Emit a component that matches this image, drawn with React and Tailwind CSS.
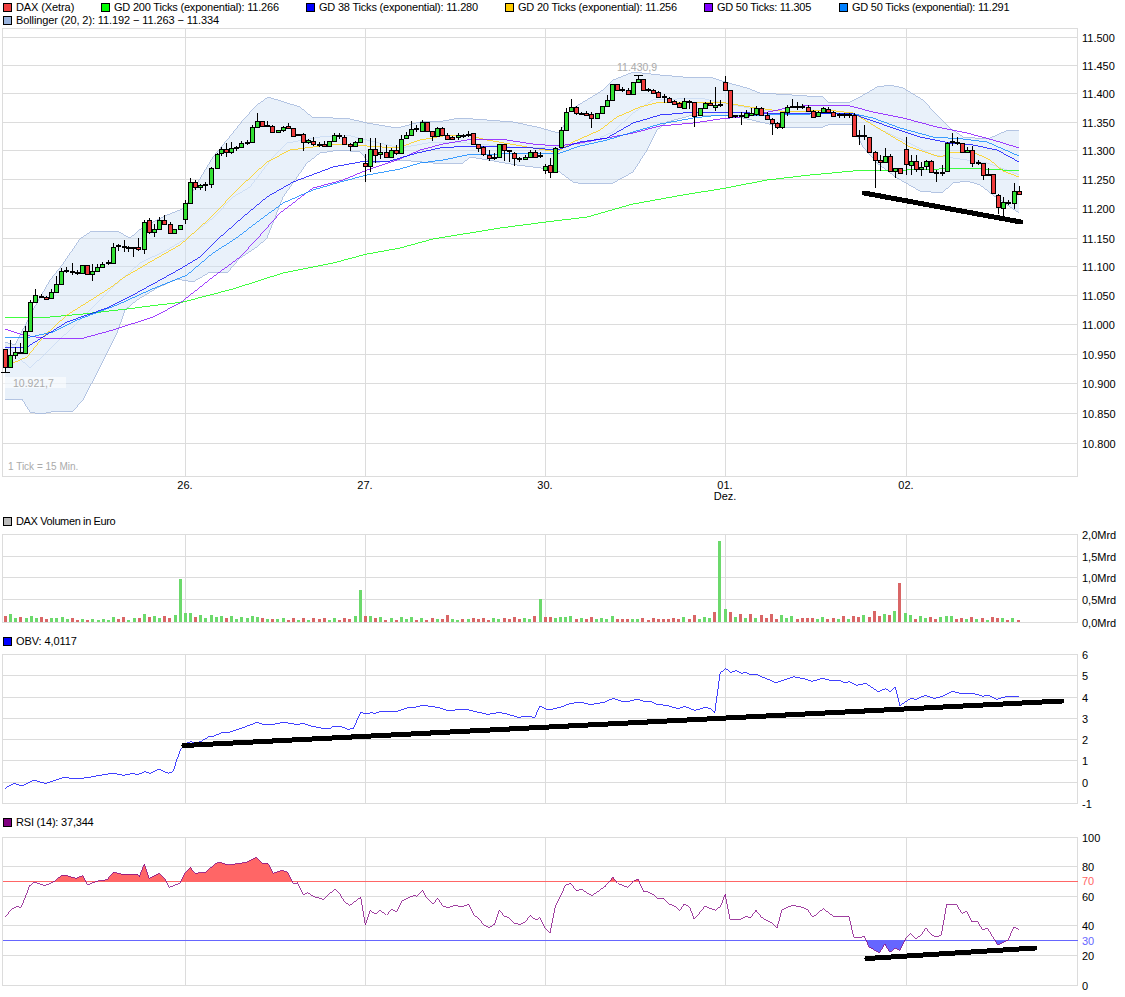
import React from "react";

const dayLines = [185.5, 365.5, 545.5, 725.5, 906.5];

// [x, body top, body bottom, wick top, wick bottom, type]
const candles = [
  [5,349,367,349,372,"r"],[10,355,367,340,368,"g"],[15,352,355,347,359,"g"],[20,352,353,343,354,"r"],[25,331,353,326,353,"g"],
  [30,302,331,300,331,"g"],[35,295,302,289,302,"g"],[41,296,297,294,298,"r"],[46,297,299,296,300,"r"],[51,292,298,289,299,"g"],
  [56,284,292,276,293,"g"],[61,271,284,268,285,"g"],[66,271,271,267,273,"d"],[72,271,272,263,275,"r"],[77,273,273,270,275,"d"],
  [82,265,273,265,274,"g"],[87,265,274,265,274,"r"],[92,271,274,264,281,"g"],[97,267,271,264,272,"g"],[102,264,267,262,268,"g"],
  [108,263,263,260,265,"d"],[113,247,263,243,264,"g"],[118,246,246,244,251,"d"],[124,247,247,240,252,"d"],[128,248,248,246,252,"d"],
  [133,248,248,248,257,"d"],[138,247,249,238,251,"r"],[144,222,249,220,254,"g"],[149,220,232,218,234,"r"],[154,229,232,224,237,"g"],
  [159,220,229,217,230,"g"],[164,220,224,215,225,"r"],[170,224,233,222,234,"r"],[174,229,233,229,234,"g"],[180,225,229,225,229,"g"],
  [185,203,219,200,224,"g"],[190,182,203,178,204,"g"],[195,182,187,180,190,"r"],[200,185,187,184,190,"g"],[205,185,185,182,191,"d"],
  [211,168,184,167,188,"g"],[217,154,168,153,169,"g"],[221,149,153,147,156,"g"],[226,149,152,143,157,"r"],[231,148,152,142,154,"g"],
  [236,147,148,146,151,"g"],[241,143,147,141,148,"g"],[247,143,143,140,145,"d"],[252,127,142,125,143,"g"],[257,121,127,113,128,"g"],
  [262,121,126,121,127,"r"],[267,126,126,121,127,"d"],[272,126,132,125,132,"r"],[278,130,132,130,133,"g"],[283,127,130,126,132,"g"],
  [288,126,128,123,129,"r"],[293,128,136,128,137,"r"],[298,135,135,134,136,"d"],[303,134,142,133,151,"r"],[308,140,142,139,144,"g"],
  [313,141,144,137,146,"r"],[319,145,145,142,147,"d"],[324,144,146,141,147,"r"],[329,141,146,141,147,"g"],[334,135,141,133,142,"g"],
  [339,136,136,133,139,"d"],[344,137,144,135,145,"r"],[350,144,146,143,151,"r"],[355,142,146,141,147,"g"],[360,138,142,138,143,"g"],
  [365,163,166,154,182,"r"],[370,149,166,138,172,"g"],[375,149,155,138,163,"r"],[380,152,154,143,159,"g"],[386,152,157,145,158,"r"],
  [391,150,157,148,158,"g"],[396,150,153,145,155,"r"],[401,139,153,135,153,"g"],[406,135,138,132,139,"g"],[411,129,135,121,136,"g"],
  [416,129,129,125,132,"d"],[422,122,131,120,132,"g"],[427,122,131,122,132,"r"],[432,131,136,131,141,"r"],[437,128,136,127,137,"g"],
  [442,128,135,127,135,"r"],[447,135,139,133,140,"r"],[452,137,139,136,140,"r"],[458,135,137,133,140,"g"],[463,136,136,134,138,"d"],
  [468,135,135,131,137,"d"],[473,133,144,133,145,"r"],[478,144,148,144,152,"r"],[483,147,154,146,156,"r"],[489,155,158,150,161,"r"],
  [494,157,158,153,160,"g"],[499,144,157,144,158,"g"],[504,144,150,144,161,"r"],[509,151,151,150,162,"d"],[514,153,158,152,166,"r"],
  [519,159,159,157,162,"d"],[525,157,159,155,160,"g"],[530,152,157,150,157,"g"],[535,152,157,150,158,"r"],[540,156,156,152,158,"d"],
  [545,166,170,164,174,"g"],[550,165,172,158,178,"r"],[555,148,172,147,172,"g"],[561,130,147,127,148,"g"],[566,112,130,108,130,"g"],
  [571,107,111,99,112,"g"],[576,107,113,106,115,"r"],[581,113,114,112,115,"g"],[586,113,115,111,116,"r"],[591,114,118,112,128,"r"],
  [597,113,118,113,119,"g"],[602,106,113,106,114,"g"],[607,100,106,95,107,"g"],[612,84,100,84,100,"g"],[617,84,90,84,91,"r"],
  [622,90,90,87,92,"d"],[628,90,94,88,95,"r"],[633,82,94,82,95,"g"],[638,79,82,76,82,"g"],[643,79,90,79,90,"r"],
  [648,90,90,88,92,"d"],[653,90,93,89,94,"r"],[658,92,97,91,97,"r"],[664,97,97,94,103,"d"],[669,98,102,97,102,"r"],
  [674,101,104,100,105,"r"],[679,103,107,102,108,"r"],[684,101,108,98,109,"g"],[689,102,102,100,109,"d"],[694,102,116,102,127,"r"],
  [700,108,115,108,116,"g"],[705,103,108,102,109,"g"],[710,103,105,100,106,"r"],[715,105,107,87,111,"g"],[720,105,106,100,107,"d"],
  [725,82,90,76,90,"r"],[730,90,117,90,118,"r"],[735,116,116,115,118,"d"],[741,116,116,112,125,"d"],[746,113,117,110,118,"g"],
  [751,113,115,108,116,"g"],[756,108,114,106,116,"g"],[761,108,115,107,116,"r"],[767,115,119,112,120,"r"],[772,119,123,118,135,"r"],
  [777,123,127,122,129,"r"],[782,112,127,112,129,"g"],[787,107,112,105,116,"g"],[792,107,108,99,108,"d"],[797,107,107,102,110,"d"],
  [802,107,107,104,109,"d"],[808,107,111,105,112,"r"],[813,111,117,110,118,"r"],[818,112,116,111,117,"g"],[823,108,112,107,113,"g"],
  [828,109,112,107,113,"r"],[833,112,116,111,117,"r"],[839,115,115,113,118,"d"],[844,115,115,113,118,"d"],[849,115,115,113,118,"d"],
  [854,115,136,113,137,"r"],[859,136,136,130,145,"d"],[864,136,136,125,140,"d"],[869,137,152,137,153,"r"],[875,152,160,151,188,"r"],
  [880,160,162,155,171,"r"],[885,156,162,148,163,"g"],[890,156,171,154,172,"r"],[895,168,171,168,178,"g"],[900,168,173,168,174,"r"],
  [906,149,164,137,175,"r"],[911,161,165,155,175,"g"],[916,161,169,155,172,"r"],[921,167,169,162,176,"g"],[926,161,166,160,170,"g"],
  [931,161,172,160,173,"r"],[936,173,173,170,182,"d"],[942,173,173,165,176,"d"],[947,143,171,142,172,"g"],[952,142,142,133,146,"d"],
  [957,143,143,137,145,"d"],[962,143,152,143,153,"r"],[967,150,152,147,153,"g"],[972,150,163,146,167,"r"],[978,163,163,160,165,"d"],
  [983,163,175,163,180,"r"],[988,174,175,168,176,"g"],[993,174,193,174,194,"r"],[998,195,207,194,214,"r"],[1003,202,208,197,216,"g"],
  [1008,203,203,200,205,"d"],[1014,191,203,183,209,"g"],[1019,191,194,186,195,"r"],
];

const bollUpper = [[5,342],[15,345],[33,310],[50,280],[62,265],[80,239],[90,232],[117,231],[130,238],[143,227],[167,215],[185,208],[195,187],[213,157],[227,140],[243,120],[257,105],[268,97],[287,103],[300,107],[312,117],[333,118],[350,119],[367,123],[397,128],[420,122],[443,121],[460,118],[513,122],[537,127],[558,133],[563,127],[570,110],[590,98],[603,90],[613,80],[633,72],[660,75],[683,77],[713,78],[725,82],[747,88],[760,93],[823,97],[828,102],[850,102],[860,97],[877,87],[890,85],[903,88],[923,100],[937,115],[950,128],[963,137],[987,139],[997,135],[1008,130],[1019,131]];
const bollLower = [[5,400],[22,399],[30,412],[40,414],[57,411],[72,412],[83,400],[100,367],[117,333],[125,310],[137,300],[157,288],[177,279],[193,282],[210,272],[227,273],[240,258],[257,247],[267,238],[283,197],[293,183],[307,163],[320,153],[340,150],[360,152],[370,163],[400,160],[433,163],[463,163],[470,157],[517,165],[557,170],[573,182],[583,184],[613,183],[633,172],[647,150],[657,130],[667,122],[693,115],[725,115],[743,118],[760,122],[783,127],[823,127],[830,124],[852,125],[863,147],[877,163],[897,178],[920,191],[942,193],[953,183],[967,181],[980,185],[993,195],[1019,213]];
const bollMid = [[5,345],[30,368],[47,352],[83,317],[113,287],[140,263],[167,250],[187,238],[213,218],[233,197],[250,187],[273,157],[287,143],[320,137],[347,135],[367,140],[400,148],[433,142],[467,143],[510,147],[557,147],[587,143],[613,132],[633,113],[653,100],[700,98],[733,105],[760,110],[827,113],[860,115],[877,128],[907,142],[933,155],[953,158],[987,163],[1007,170],[1019,175]];

const averages = [
  { color: "#00ff00", points: [[5,317],[50,317],[83,314],[127,309],[150,306],[183,302],[233,289],[283,273],[333,263],[367,254],[400,248],[433,239],[500,228],[546,222],[587,217],[633,204],[683,195],[726,188],[767,180],[810,175],[853,171],[907,170],[970,168],[1019,171]] },
  { color: "#ffcc00", points: [[13,363],[27,357],[43,337],[67,315],[83,305],[110,288],[123,278],[150,262],[180,245],[188,238],[210,218],[240,187],[267,162],[290,150],[320,146],[343,144],[367,146],[397,148],[420,140],[443,136],[467,135],[487,140],[533,148],[557,152],[573,142],[600,130],[617,117],[640,107],[660,102],[687,103],[720,102],[750,107],[787,112],[827,110],[853,113],[873,125],[893,137],[910,147],[940,157],[950,153],[973,152],[990,160],[1003,171],[1019,177]] },
  { color: "#8000ff", points: [[5,329],[23,335],[43,338],[80,339],[113,330],[153,317],[180,303],[213,277],[240,257],[257,239],[280,213],[313,188],[343,180],[367,170],[400,159],[420,150],[443,144],[467,140],[500,139],[533,144],[557,146],[580,143],[607,138],[633,133],[660,126],[693,123],[720,119],[750,116],[787,108],[810,105],[850,106],[873,112],[903,118],[937,127],[967,133],[993,140],[1019,148]] },
  { color: "#0080ff", points: [[5,338],[30,337],[53,332],[77,320],[117,305],[150,290],[187,275],[213,253],[235,239],[260,220],[283,203],[313,190],[340,182],[367,175],[400,169],[420,163],[443,160],[467,155],[500,154],[533,153],[557,154],[580,146],[607,140],[633,132],[660,124],[693,118],[720,115],[767,115],[810,114],[850,113],[873,118],[900,128],[933,137],[963,139],[987,142],[1019,156]] },
  { color: "#0000ff", points: [[5,348],[27,347],[67,322],[107,308],[133,295],[180,269],[200,257],[218,239],[243,217],[267,197],[293,182],[333,167],[360,162],[390,161],[400,158],[417,153],[440,148],[467,146],[500,147],[533,148],[557,150],[580,142],[607,138],[633,123],[660,115],[683,113],[720,112],[750,113],[850,113],[870,120],[893,128],[920,137],[950,143],[973,145],[997,150],[1019,162]] },
];

// positive = green bar, negative = red bar
const volumes = [
  -6,8,4,-5,4,6,4,-5,-3,4,4,5,3,-4,-2,3,-2,3,2,3,2,5,-3,-5,2,4,-4,8,-5,6,4,-6,-4,7,43,9,9,-5,7,4,7,5,6,-4,6,3,5,4,6,5,-4,3,-3,3,4,-2,-4,2,-4,2,-4,-3,-4,2,4,-2,-4,-3,6,32,-6,6,-4,5,-2,4,
  -2,5,3,5,-2,4,-2,-4,3,-3,-7,3,2,-3,3,-4,-3,-4,-2,4,3,-4,-3,-5,-3,4,3,-6,23,-5,-5,4,5,5,6,-3,4,-3,-5,3,4,3,6,-3,-3,-3,3,3,-4,-2,-4,-3,-3,-3,-4,-3,5,-3,-7,3,
  5,4,-10,81,13,-10,5,-8,4,-8,4,-7,-4,-8,-3,7,4,6,-3,-4,-4,-4,3,5,-3,-4,3,-6,3,-6,-5,7,-5,-11,-6,8,-7,11,-39,9,7,-3,6,4,-5,-3,5,6,6,-3,-4,3,-5,3,-4,2,-5,-4,4,-2,4,-2,
];

const obvLine = [
  ...[[14,475],[40,460],[60,468],[95,451],[128,460],[180,442],[215,447],[250,442],[280,436],[315,430],[345,436],[370,431],[385,433],[405,424],[420,430],[445,418],[472,430],[485,424],[495,390],[505,360],[520,340],[535,335],[545,340],[565,333],[585,320],[600,318],[620,308],[640,308],[680,293],[720,277],[735,283],[770,282],[795,277],[830,283],[850,281],[870,288],[905,295],[925,295],[935,288],[955,290],[975,298],[990,295],[1000,270],[1010,247],[1025,252],[1040,248],[1050,250],[1065,244],[1075,246],[1110,244],[1150,231],[1165,231],[1185,226],[1230,233],[1255,243],[1280,239],[1310,239],[1340,247],[1365,253],[1395,247],[1420,252],[1450,262],[1475,259],[1497,262],[1512,229],[1535,240]].map(([x, y]) => [x / 2.8, 630 + y / 3]),
  ...[[0,232],[30,220],[60,217],[85,224],[125,216],[148,205],[170,213],[195,213],[215,208],[235,214],[250,214],[270,223],[295,226],[330,236],[345,229],[375,241],[405,232],[420,236],[430,250],[445,130],[460,115],[475,127],[490,122],[505,130],[515,127],[530,135],[545,133],[600,158],[650,140],[680,147],[700,154],[730,145],[760,153],[780,152],[790,158],[805,155],[825,166],[850,160],[885,185],[905,176],[918,185],[932,170],[945,227],[975,205],[990,208],[1015,196],[1040,205],[1060,200],[1090,184],[1120,192],[1140,190],[1160,193],[1175,199],[1190,196],[1215,208],[1230,202],[1255,199],[1275,199]].map(([x, y]) => [560 + x / 2.78, 630 + y / 3]),
];

const rsiLine = [
  ...[[15,320],[35,295],[45,289],[58,292],[70,265],[82,228],[97,216],[125,227],[140,221],[155,212],[172,196],[185,196],[212,205],[232,197],[245,224],[265,215],[280,212],[300,209],[317,187],[340,192],[385,193],[390,200],[404,163],[418,205],[445,190],[462,207],[474,232],[503,220],[518,190],[533,172],[545,190],[575,187],[605,160],[617,157],[640,165],[690,157],[717,142],[735,160],[750,160],[765,190],[790,181],[805,187],[822,223],[833,218],[850,254],[860,248],[880,260],[905,268],[937,238],[950,248],[965,277],[980,286],[1010,262],[1023,344],[1037,300],[1050,313],[1065,301],[1082,316],[1097,298],[1110,306],[1127,270],[1155,257],[1168,259],[1183,240],[1197,268],[1212,283],[1225,265],[1240,288],[1255,294],[1270,287],[1295,289],[1312,282],[1327,316],[1340,325],[1355,345],[1370,353],[1385,342],[1398,301],[1412,318],[1425,323],[1440,340],[1455,343],[1470,337],[1485,316],[1500,330],[1512,323],[1527,355],[1540,370],[1555,290]].map(([x, y]) => [x / 2.8, 810 + y / 3]),
  ...[[0,262],[15,226],[30,220],[45,242],[60,238],[88,257],[125,230],[147,202],[160,220],[188,232],[205,212],[217,208],[232,244],[245,246],[258,253],[272,265],[288,265],[303,282],[318,288],[333,301],[345,283],[360,290],[373,328],[403,289],[432,301],[447,288],[459,253],[473,328],[503,328],[517,319],[530,323],[545,301],[560,322],[590,340],[603,355],[617,300],[645,286],[675,292],[690,301],[703,322],[732,296],[760,319],[803,319],[817,382],[837,382],[845,378],[860,412],[888,428],[903,402],[917,427],[932,414],[945,421],[960,387],[975,370],[990,386],[1003,376],[1017,354],[1032,374],[1045,380],[1060,376],[1075,283],[1103,285],[1117,310],[1130,304],[1145,336],[1160,333],[1175,360],[1188,354],[1217,405],[1245,390],[1262,352],[1275,358]].map(([x, y]) => [560 + x / 2.78, 810 + y / 3]),
];

const pts = (list) => list.map((p) => p.join(",")).join(" ");

const LegendItem = ({ swatch, label, className }) => (
  <div className={"flex items-center gap-[4px] whitespace-nowrap " + className}>
    <span className={"w-[9px] h-[9px] border border-black shrink-0 " + swatch} />
    <span>{label}</span>
  </div>
);

// panel frame, horizontal grid lines, day lines and the axis labels on the right
const Frame = ({ top, bottom, rows }) => (
  <g>
    <g stroke="#dcdcdc" fill="none" shapeRendering="crispEdges">
      <rect x="2.5" y={top} width="1075" height={bottom - top} />
      {rows.map((r) => (
        <line key={r.label} x1="2.5" x2="1078" y1={r.y} y2={r.y} />
      ))}
      {dayLines.map((x) => (
        <line key={x} x1={x} x2={x} y1={top} y2={bottom} />
      ))}
    </g>
    {rows.map((r) => (
      <text key={r.label} x="1082" y={r.y + 4} fontSize="11" fill={r.color || "#000"}>
        {r.label}
      </text>
    ))}
  </g>
);

const Candle = ({ c }) => {
  const [x, top, bot, wickTop, wickBot, type] = c;
  if (type === "d") {
    return (
      <g shapeRendering="crispEdges">
        <line x1={x + 0.5} x2={x + 0.5} y1={wickTop} y2={wickBot} stroke="#000" />
        <rect x={x - 2} y={top - 1} width="5" height="2" fill="#000" />
      </g>
    );
  }
  return (
    <g shapeRendering="crispEdges">
      <line x1={x + 0.5} x2={x + 0.5} y1={wickTop} y2={wickBot} stroke="#000" />
      <rect
        x={x - 1.5}
        y={top + 0.5}
        width="4"
        height={Math.max(bot - top, 1)}
        fill={type === "g" ? "#33e033" : "#ee3b3b"}
        stroke="#000"
      />
    </g>
  );
};

const priceRows = [
  [37.5, "11.500"], [65.5, "11.450"], [93.5, "11.400"], [122.5, "11.350"], [150.5, "11.300"],
  [179.5, "11.250"], [208.5, "11.200"], [238.5, "11.150"], [266.5, "11.100"], [295.5, "11.050"],
  [324.5, "11.000"], [354.5, "10.950"], [383.5, "10.900"], [413.5, "10.850"], [443.5, "10.800"],
].map(([y, label]) => ({ y, label }));

const PriceChart = () => (
  <svg className="block" width="1125" height="486" viewBox="0 27 1125 486">
    <Frame top={28.5} bottom={476.5} rows={priceRows} />
    <polygon points={pts([...bollUpper, ...[...bollLower].reverse()])} fill="#cfe0f5" fillOpacity="0.45" />
    <g fill="none" shapeRendering="crispEdges" strokeWidth="0.75">
      <polyline points={pts(bollUpper)} stroke="#9db3d9" />
      <polyline points={pts(bollLower)} stroke="#9db3d9" />
      <polyline points={pts(bollMid)} stroke="#c6d8f3" />
    </g>
    <rect x="3" y="377" width="63" height="11" fill="#fff" fillOpacity="0.55" />
    <text x="13" y="387" fontSize="10.5" fill="#aaa">10.921,7</text>
    <text x="617" y="71" fontSize="10.5" fill="#aaa">11.430,9</text>
    <text x="8" y="470" fontSize="10" fill="#aaa">1 Tick = 15 Min.</text>
    <g fill="none" shapeRendering="crispEdges" strokeWidth="0.75">
      {averages.map((a) => (
        <polyline key={a.color} points={pts(a.points)} stroke={a.color} />
      ))}
    </g>
    {candles.map((c) => (
      <Candle key={c[0]} c={c} />
    ))}
    <g stroke="#000" shapeRendering="crispEdges">
      <line x1="1" x2="10" y1="372.5" y2="372.5" />
      <line x1="634" x2="643" y1="75.5" y2="75.5" />
      <line x1="864" y1="193" x2="1021" y2="222" strokeWidth="5" strokeLinecap="round" />
    </g>
    {[["26.", 185], ["27.", 365], ["30.", 545], ["01.", 725], ["02.", 906]].map(([label, x]) => (
      <text key={label} x={x} y="489" fontSize="11" textAnchor="middle" fill="#000">{label}</text>
    ))}
    <text x="725" y="500" fontSize="11" textAnchor="middle" fill="#000">Dez.</text>
  </svg>
);

const volumeRows = [
  [534.5, "2,0Mrd"], [556.5, "1,5Mrd"], [577.5, "1,0Mrd"], [599.5, "0,5Mrd"], [622.5, "0,0Mrd"],
].map(([y, label]) => ({ y, label }));

const VolumeChart = () => (
  <svg className="block" width="1125" height="104" viewBox="0 529 1125 104">
    <Frame top={534.5} bottom={622.5} rows={volumeRows} />
    <g shapeRendering="crispEdges">
      {volumes.map((v, i) => {
        const h = Math.abs(v);
        return (
          <rect
            key={i}
            x={Math.round(4 + i * 5.14)}
            y={622 - h}
            width="3"
            height={h}
            fill={v > 0 ? "#6cd96c" : "#d96666"}
          />
        );
      })}
    </g>
  </svg>
);

const obvRows = [
  [654.5, "6"], [675.5, "5"], [697.5, "4"], [718.5, "3"], [739.5, "2"], [760.5, "1"], [782.5, "0"], [803.5, "-1"],
].map(([y, label]) => ({ y, label }));

const ObvChart = () => (
  <svg className="block" width="1125" height="165" viewBox="0 649 1125 165">
    <Frame top={654.5} bottom={803.5} rows={obvRows} />
    <polyline points={pts(obvLine)} fill="none" stroke="#0000ff" strokeWidth="0.75" shapeRendering="crispEdges" />
    <line x1="184" y1="745.5" x2="1062" y2="701" stroke="#000" strokeWidth="5" strokeLinecap="round" shapeRendering="crispEdges" />
  </svg>
);

const rsiRows = [
  { y: 837.5, label: "100" },
  { y: 866.5, label: "80" },
  { y: 896.5, label: "60" },
  { y: 925.5, label: "40" },
  { y: 955.5, label: "20" },
  { y: 985.5, label: "0" },
];

const RsiChart = () => (
  <svg className="block" width="1125" height="167" viewBox="0 830 1125 167">
    <defs>
      <clipPath id="over70"><rect x="0" y="830" width="1125" height="51" /></clipPath>
      <clipPath id="under30"><rect x="0" y="941" width="1125" height="50" /></clipPath>
    </defs>
    <Frame top={837.5} bottom={985.5} rows={rsiRows} />
    <polygon points={pts([[5, 881], ...rsiLine, [1018, 881]])} fill="#ff6666" clipPath="url(#over70)" />
    <polygon points={pts([[5, 941], ...rsiLine, [1018, 941]])} fill="#6666ff" clipPath="url(#under30)" />
    <g shapeRendering="crispEdges">
      <line x1="2.5" x2="1078" y1="881.5" y2="881.5" stroke="#ff6666" />
      <line x1="2.5" x2="1078" y1="940.5" y2="940.5" stroke="#6666ff" />
    </g>
    <text x="1082" y="885" fontSize="11" fill="#ff6666">70</text>
    <text x="1082" y="945" fontSize="11" fill="#6666ff">30</text>
    <polyline points={pts(rsiLine)} fill="none" stroke="#800080" strokeWidth="0.75" shapeRendering="crispEdges" />
    <line x1="867" y1="958.5" x2="1035" y2="948" stroke="#000" strokeWidth="5" strokeLinecap="round" shapeRendering="crispEdges" />
  </svg>
);

const App = () => {
  return (
    <div className="w-[1125px] h-[997px] bg-white text-black text-[11px] leading-none font-['Liberation_Sans',sans-serif] overflow-hidden">
      {/* Legend */}
      <div className="h-[27px] pl-[3px] pt-[1px] flex flex-col">
        <div className="flex items-center h-[13px]">
          <LegendItem swatch="bg-[#f04040]" label="DAX (Xetra)" className="w-[98px] tracking-[-0.1px]" />
          <LegendItem swatch="bg-[#00ff00]" label="GD 200 Ticks (exponential): 11.266" className="w-[205px] tracking-[-0.2px]" />
          <LegendItem swatch="bg-[#0000ff]" label="GD 38 Ticks (exponential): 11.280" className="w-[199px] tracking-[-0.2px]" />
          <LegendItem swatch="bg-[#ffcc00]" label="GD 20 Ticks (exponential): 11.256" className="w-[199px] tracking-[-0.2px]" />
          <LegendItem swatch="bg-[#8000ff]" label="GD 50 Ticks: 11.305" className="w-[135px] tracking-[-0.25px]" />
          <LegendItem swatch="bg-[#0080ff]" label="GD 50 Ticks (exponential): 11.291" className="w-[210px] tracking-[-0.25px]" />
        </div>
        <div className="flex items-center h-[13px]">
          <LegendItem swatch="bg-[#99b3dd]" label="Bollinger (20, 2): 11.192 − 11.263 − 11.334" className="w-[300px] tracking-[-0.1px]" />
        </div>
      </div>

      <PriceChart />

      <div className="h-[16px] pl-[3px] flex items-center">
        <LegendItem swatch="bg-[#bbbbbb]" label="DAX Volumen in Euro" className="w-[200px] tracking-[-0.37px]" />
      </div>
      <VolumeChart />

      <div className="h-[16px] pl-[3px] flex items-center">
        <LegendItem swatch="bg-[#0000ff]" label="OBV: 4,0117" className="w-[200px] tracking-[-0.1px]" />
      </div>
      <ObvChart />

      <div className="h-[16px] pl-[3px] flex items-center">
        <LegendItem swatch="bg-[#800080]" label="RSI (14): 37,344" className="w-[200px] tracking-[-0.2px]" />
      </div>
      <RsiChart />
    </div>
  );
};

export default App;
